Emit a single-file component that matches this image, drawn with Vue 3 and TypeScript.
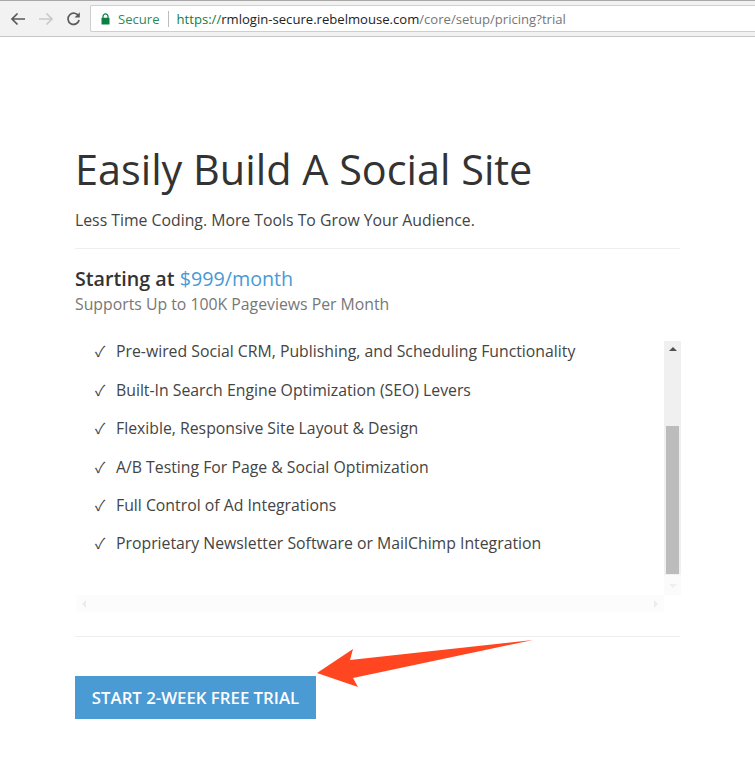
<template>
  <div class="page">
    <header class="toolbar">
      <div class="nav-buttons">
        <svg width="16" height="14" viewBox="0 0 16 14" class="nav-icon">
          <path d="M15 7H2M7.5 1.5 2 7l5.5 5.5" fill="none" stroke="#5a5a5a" stroke-width="1.7" />
        </svg>
        <svg width="16" height="14" viewBox="0 0 16 14" class="nav-icon">
          <path d="M1 7h13M8.5 1.5 14 7l-5.5 5.5" fill="none" stroke="#c9c9c9" stroke-width="1.7" />
        </svg>
        <svg width="15" height="15" viewBox="0 0 15 15" class="nav-icon">
          <path d="M12.6 5.2A5.6 5.6 0 1 0 13.1 9" fill="none" stroke="#5a5a5a" stroke-width="1.7" />
          <path d="M13.8 1.2v5.3H8.5z" fill="#5a5a5a" />
        </svg>
      </div>
      <div class="address">
        <svg width="9" height="12" viewBox="0 0 9 12" class="lock">
          <path d="M2 5V3.4a2.5 2.5 0 0 1 5 0V5" fill="none" stroke="#0b8043" stroke-width="1.2" />
          <rect x="0.5" y="4.8" width="8" height="6.7" rx="0.6" fill="#0b8043" />
        </svg>
        <span class="secure">Secure</span>
        <span class="divider"></span>
        <span class="url"><span class="scheme">https://</span><span class="host">rmlogin-secure.rebelmouse.com</span>/core/setup/pricing?trial</span>
      </div>
    </header>

    <main class="content">
      <h1>Easily Build A Social Site</h1>
      <p class="tagline">Less Time Coding. More Tools To Grow Your Audience.</p>
      <hr class="rule" />
      <p class="price"><strong>Starting at</strong> <span>$999/month</span></p>
      <p class="supports">Supports Up to 100K Pageviews Per Month</p>

      <div class="features">
        <div class="features-body">
          <ul>
            <li v-for="item in features" :key="item"><span class="check">✓</span>{{ item }}</li>
          </ul>
          <div class="hbar">
            <span class="tri tri-left"></span>
            <span class="tri tri-right"></span>
          </div>
        </div>
        <div class="vbar">
          <span class="tri tri-up"></span>
          <div class="thumb"></div>
          <span class="tri tri-down"></span>
        </div>
      </div>

      <hr class="rule rule-bottom" />
      <button class="cta" type="button">START 2-WEEK FREE TRIAL</button>

      <svg class="arrow" width="222" height="52" viewBox="0 0 222 52">
        <path d="M2 34 38 10 35 21 218 1 38 39 43 48Z" fill="#ff4620" />
      </svg>
    </main>
  </div>
</template>

<script setup lang="ts">
const features: string[] = [
  'Pre-wired Social CRM, Publishing, and Scheduling Functionality',
  'Built-In Search Engine Optimization (SEO) Levers',
  'Flexible, Responsive Site Layout & Design',
  'A/B Testing For Page & Social Optimization',
  'Full Control of Ad Integrations',
  'Proprietary Newsletter Software or MailChimp Integration',
]
</script>

<style>
html,
body {
  margin: 0;
  background: #fff;
}
</style>

<style scoped>
.page {
  width: 755px;
  height: 769px;
  overflow: hidden;
  font-family: "Open Sans", sans-serif;
  color: #333;
  background: #fff;
}

.toolbar {
  display: flex;
  align-items: center;
  height: 37px;
  box-sizing: border-box;
  padding-left: 10px;
  background: #f2f2f2;
  border-top: 1px solid #a8a8a8;
  border-bottom: 1px solid #c6c6c6;
}

.nav-buttons {
  display: flex;
  align-items: center;
  gap: 12px;
  width: 80px;
}

.address {
  flex: 1;
  display: flex;
  align-items: center;
  height: 27px;
  box-sizing: border-box;
  padding-left: 10px;
  background: #fff;
  border: 1px solid #cfcfcf;
  border-right: 0;
  border-radius: 2px 0 0 2px;
  font-size: 13.1px;
}

.lock {
  margin-right: 8px;
}

.secure {
  color: #2e8a5c;
}

.divider {
  width: 1px;
  height: 16px;
  margin: 0 8px;
  background: #bdbdbd;
}

.url {
  color: #767676;
}

.scheme {
  color: #0b8043;
}

.host {
  color: #222;
}

.content {
  position: relative;
  width: 605px;
  margin-left: 75px;
  padding-top: 105px;
}

h1 {
  margin: 0;
  font-size: 41.4px;
  font-weight: 400;
  line-height: 54px;
  color: #333;
}

.tagline {
  margin: 13px 0 0;
  font-size: 15.8px;
  line-height: 22px;
  color: #444;
}

.rule {
  height: 1px;
  margin: 17px 0 0;
  border: 0;
  background: #eee;
}

.price {
  margin: 17px 0 0;
  font-size: 19.7px;
  line-height: 26px;
}

.price strong {
  font-weight: 600;
}

.price span {
  color: #4a9ad4;
}

.supports {
  margin: 0;
  font-size: 15.8px;
  line-height: 24px;
  color: #777;
}

.features {
  display: flex;
  width: 606px;
  margin-top: 25px;
}

.features-body {
  flex: 1;
  padding-left: 1px;
  min-width: 0;
}

ul {
  display: flex;
  flex-direction: column;
  gap: 18.4px;
  margin: 0;
  padding: 0.45px 0 0 19px;
  height: 254px;
  box-sizing: border-box;
  list-style: none;
}

li {
  display: flex;
  font-size: 15.8px;
  line-height: 20px;
  color: #444;
}

.check {
  width: 21px;
  font-family: "Noto Sans CJK JP", sans-serif;
  font-size: 15px;
  color: #444;
}

.hbar {
  display: flex;
  align-items: center;
  justify-content: space-between;
  height: 17px;
  padding: 0 6px;
  background: #fcfcfc;
}

.vbar {
  display: flex;
  flex-direction: column;
  align-items: center;
  width: 17px;
  height: 254px;
  background: linear-gradient(#f0f0f0 234px, #fbfbfb 234px);
}

.thumb {
  width: 13px;
  height: 148px;
  margin-top: auto;
  background: #bcbcbc;
}

.tri {
  display: block;
  width: 0;
  height: 0;
  border-style: solid;
  border-color: transparent;
}

.tri-up {
  margin-top: 6px;
  border-width: 0 4px 4px;
  border-bottom-color: #505050;
}

.tri-down {
  margin: 10px 0 7px;
  border-width: 4px 4px 0;
  border-top-color: #efefef;
}

.tri-left {
  border-width: 4px 4px 4px 0;
  border-right-color: #ececec;
}

.tri-right {
  border-width: 4px 0 4px 4px;
  border-left-color: #ececec;
}

.rule-bottom {
  margin-top: 24px;
}

.cta {
  display: block;
  width: 241px;
  height: 43px;
  margin-top: 39px;
  padding: 0;
  border: 0;
  background: #4a9ad4;
  color: #fff;
  font-family: inherit;
  font-size: 16.8px;
  font-weight: 600;
}

.arrow {
  position: absolute;
  left: 240px;
  top: 602px;
}
</style>
